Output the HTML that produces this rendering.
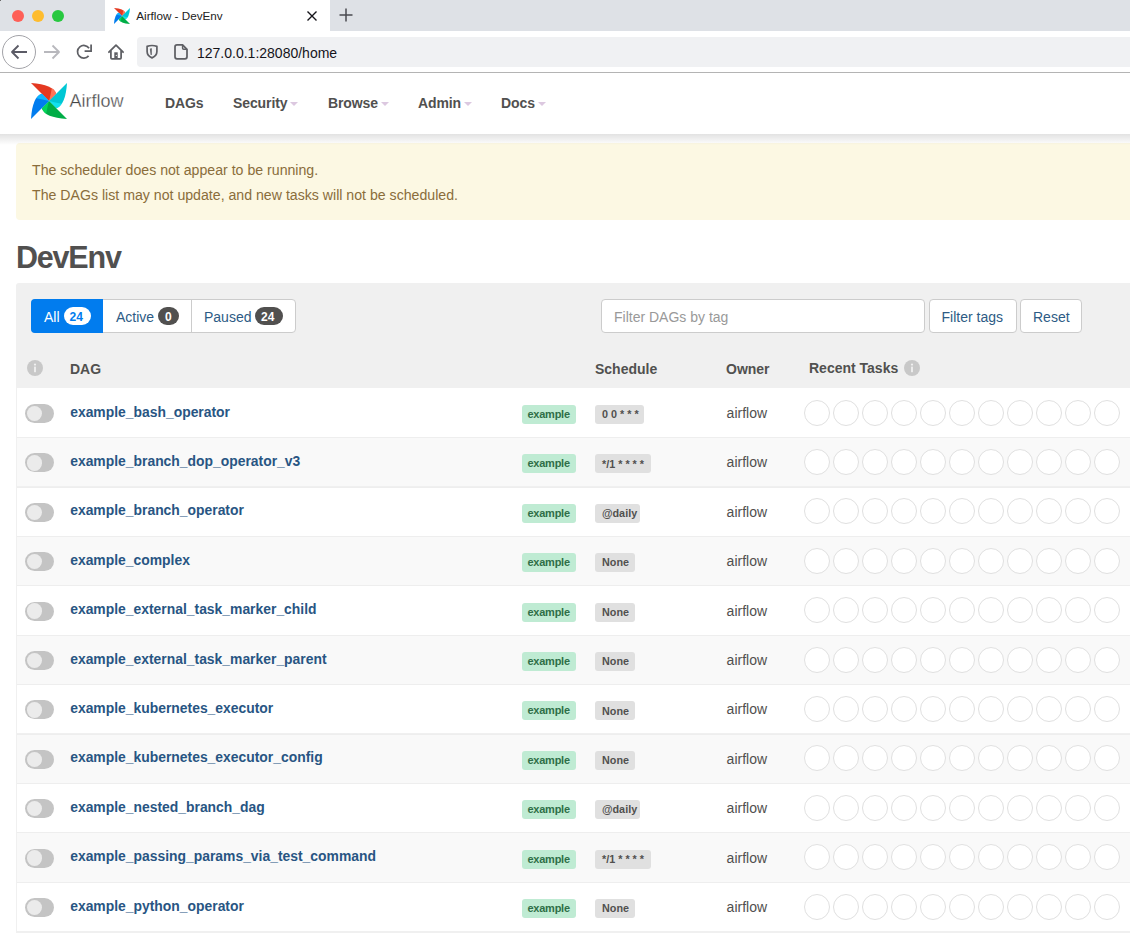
<!DOCTYPE html><html><head><meta charset="utf-8"><title>Airflow - DevEnv</title><style>
*{margin:0;padding:0;box-sizing:border-box}
html,body{width:1130px;height:933px;overflow:hidden;background:#fff;font-family:"Liberation Sans", sans-serif;}
.t{position:absolute;white-space:pre}
.a{position:absolute}
</style></head><body>
<div class="a" style="left:0;top:0;width:1130px;height:31px;background:#dee1e6"></div>
<div class="a" style="left:105px;top:0;width:225px;height:31px;background:#fff"></div>
<div class="a" style="left:0;top:0;width:1px;height:1px;background:#6a6a6a"></div>
<div class="a" style="left:12px;top:10px;width:12px;height:12px;border-radius:50%;background:#fe5f57;"></div>
<div class="a" style="left:32px;top:10px;width:12px;height:12px;border-radius:50%;background:#febc2e;"></div>
<div class="a" style="left:52px;top:10px;width:12px;height:12px;border-radius:50%;background:#28c840;"></div>
<svg class="a" style="left:114px;top:8px" width="16" height="16" viewBox="0 0 100 100">
<path d="M0,0 L50,50 L70,30 Q62,4 0,0Z" fill="#e43921"/>
<path d="M50,50 L70,30 Q67.2,20.9 57.8,14.5 Q55,32 50,50Z" fill="#ff7557"/>
<path d="M100,0 L50,50 L70,70 Q96,62 100,0Z" fill="#00c7d4"/>
<path d="M50,50 L70,70 Q79.1,67.2 85.5,57.8 Q68,55 50,50Z" fill="#11e1ee"/>
<path d="M100,100 L50,50 L30,70 Q38,96 100,100Z" fill="#00ad46"/>
<path d="M50,50 L30,70 Q32.8,79.1 42.2,85.5 Q45,68 50,50Z" fill="#04d659"/>
<path d="M0,100 L50,50 L30,30 Q4,38 0,100Z" fill="#017cee"/>
<path d="M50,50 L30,30 Q20.9,32.8 14.5,42.2 Q32,45 50,50Z" fill="#0cb6ff"/>
</svg>
<div class="t" style="left:136.3px;top:10.10px;font-size:11.7px;line-height:11.7px;font-weight:400;color:#222;">Airflow - DevEnv</div>

<svg class="a" style="left:306px;top:10px" width="12" height="12" viewBox="0 0 12 12"><path d="M1.5 1.5L10.5 10.5M10.5 1.5L1.5 10.5" stroke="#15141a" stroke-width="1.4"/></svg>
<svg class="a" style="left:338px;top:7px" width="16" height="16" viewBox="0 0 16 16"><path d="M8 1.5V14.5M1.5 8H14.5" stroke="#4a4a50" stroke-width="1.5"/></svg>
<div class="a" style="left:0;top:72px;width:1130px;height:1px;background:#b4b4b4"></div>
<div class="a" style="left:2px;top:35px;width:34px;height:34px;border-radius:50%;border:1px solid #a3a3a8"></div>
<svg class="a" style="left:10px;top:44px" width="18" height="16" viewBox="0 0 18 16"><path d="M2 8H17M8.5 1.5L2 8L8.5 14.5" stroke="#5b5b66" stroke-width="1.8" fill="none" stroke-linejoin="round"/></svg>
<svg class="a" style="left:43px;top:44px" width="18" height="16" viewBox="0 0 18 16"><path d="M1 8H16M9.5 1.5L16 8L9.5 14.5" stroke="#b8b8bd" stroke-width="1.8" fill="none" stroke-linejoin="round"/></svg>
<div class="a" style="left:137px;top:37px;width:1000px;height:30px;border-radius:4px;background:#f0f1f3"></div>
<svg class="a" style="left:0;top:0" width="200" height="75" viewBox="0 0 200 75">
<path d="M88.6,55.9 A6.3,6.3 0 1 1 89.06,48.29" stroke="#5e5f64" stroke-width="1.75" fill="none"/>
<path d="M91.1,44.4 V51.2 H84.6" stroke="#5e5f64" stroke-width="1.75" fill="none" stroke-linejoin="miter"/>
<path d="M108.9,52.2 L116,45.1 L123.1,52.2" stroke="#5e5f64" stroke-width="1.75" fill="none" stroke-linecap="round" stroke-linejoin="round"/>
<path d="M110.9,50.5 V57.8 Q110.9,58.8 111.9,58.8 H120.1 Q121.1,58.8 121.1,57.8 V50.5" stroke="#5e5f64" stroke-width="1.75" fill="none"/>
<rect x="114.3" y="52.3" width="3.4" height="6.5" fill="#5e5f64"/>
<circle cx="116.3" cy="55.4" r="0.55" fill="#fff"/>
<path d="M147.1,46.4 Q152,44.6 156.9,46.4 V51.5 Q156.9,55.8 152,57.9 Q147.1,55.8 147.1,51.5 Z" stroke="#5e5f64" stroke-width="1.7" fill="none" stroke-linejoin="round"/>
<path d="M150.3,48.9 L151.4,48.6 L151.2,54.9 Z" fill="#5e5f64" stroke="#5e5f64" stroke-width="0.8" stroke-linejoin="round"/>
<path d="M177,44.9 H182.6 L187,49.3 V56.8 Q187,58.8 185,58.8 H177 Q175,58.8 175,56.8 V46.9 Q175,44.9 177,44.9 Z" stroke="#5e5f64" stroke-width="1.75" fill="none" stroke-linejoin="round"/>
<path d="M182.6,45 V48.3 Q182.6,49.3 183.6,49.3 H186.9" stroke="#5e5f64" stroke-width="1.5" fill="none"/>
</svg>
<div class="t" style="left:197px;top:46.15px;font-size:14px;line-height:14px;font-weight:400;color:#15141a;">127.0.0.1:28080/home</div>

<div class="a" style="left:0;top:73px;width:1130px;height:61px;background:#fff;z-index:2"></div>
<div class="a" style="left:0;top:134px;width:1130px;height:11px;background:linear-gradient(rgba(0,0,0,0.115),rgba(0,0,0,0.0));z-index:2"></div>
<svg class="a" style="z-index:3;left:31px;top:83px" width="36" height="36" viewBox="0 0 100 100">
<path d="M0,0 L50,50 L70,30 Q62,4 0,0Z" fill="#e43921"/>
<path d="M50,50 L70,30 Q67.2,20.9 57.8,14.5 Q55,32 50,50Z" fill="#ff7557"/>
<path d="M100,0 L50,50 L70,70 Q96,62 100,0Z" fill="#00c7d4"/>
<path d="M50,50 L70,70 Q79.1,67.2 85.5,57.8 Q68,55 50,50Z" fill="#11e1ee"/>
<path d="M100,100 L50,50 L30,70 Q38,96 100,100Z" fill="#00ad46"/>
<path d="M50,50 L30,70 Q32.8,79.1 42.2,85.5 Q45,68 50,50Z" fill="#04d659"/>
<path d="M0,100 L50,50 L30,30 Q4,38 0,100Z" fill="#017cee"/>
<path d="M50,50 L30,30 Q20.9,32.8 14.5,42.2 Q32,45 50,50Z" fill="#0cb6ff"/>
</svg>
<div class="t" style="left:69.5px;top:91.76px;font-size:18px;line-height:18px;font-weight:400;color:#454545;z-index:3;-webkit-text-stroke:0.3px #fff">Airflow</div>

<div class="t" style="left:165px;top:96.15px;font-size:14px;line-height:14px;font-weight:700;color:#51504f;z-index:3;letter-spacing:-0.1px">DAGs</div>

<div class="t" style="left:233px;top:96.15px;font-size:14px;line-height:14px;font-weight:700;color:#51504f;z-index:3;letter-spacing:-0.1px">Security</div>

<svg class="a" style="left:290px;top:102px;z-index:3" width="8" height="4" viewBox="0 0 8 4"><path d="M0 0H8L4 4Z" fill="#dcc8e0"/></svg>
<div class="t" style="left:328px;top:96.15px;font-size:14px;line-height:14px;font-weight:700;color:#51504f;z-index:3;letter-spacing:-0.1px">Browse</div>

<svg class="a" style="left:381px;top:102px;z-index:3" width="8" height="4" viewBox="0 0 8 4"><path d="M0 0H8L4 4Z" fill="#dcc8e0"/></svg>
<div class="t" style="left:418px;top:96.15px;font-size:14px;line-height:14px;font-weight:700;color:#51504f;z-index:3;letter-spacing:-0.1px">Admin</div>

<svg class="a" style="left:464px;top:102px;z-index:3" width="8" height="4" viewBox="0 0 8 4"><path d="M0 0H8L4 4Z" fill="#dcc8e0"/></svg>
<div class="t" style="left:501px;top:96.15px;font-size:14px;line-height:14px;font-weight:700;color:#51504f;z-index:3;letter-spacing:-0.1px">Docs</div>

<svg class="a" style="left:538px;top:102px;z-index:3" width="8" height="4" viewBox="0 0 8 4"><path d="M0 0H8L4 4Z" fill="#dcc8e0"/></svg>
<div class="a" style="left:16px;top:143px;width:1130px;height:76.6px;background:#fcf8e3;border-radius:4px"></div>
<div class="t" style="left:32px;top:163.12px;font-size:14.15px;line-height:14.15px;font-weight:400;color:#8a6d3b;">The scheduler does not appear to be running.</div>

<div class="t" style="left:32px;top:187.92px;font-size:14.15px;line-height:14.15px;font-weight:400;color:#8a6d3b;">The DAGs list may not update, and new tasks will not be scheduled.</div>

<div class="t" style="left:16px;top:242.28px;font-size:30.5px;line-height:30.5px;font-weight:700;color:#51504f;letter-spacing:-1.2px">DevEnv</div>

<div class="a" style="left:16px;top:283px;width:1130px;height:700px;background:#f0f0f0;border-radius:3px"></div>
<div class="a" style="left:31px;top:299px;width:265px;height:34px;border:1px solid #ccc;border-radius:4px;background:#fff"></div>
<div class="a" style="left:31px;top:299px;width:72px;height:34px;background:#017cee;border-radius:4px 0 0 4px"></div>
<div class="a" style="left:191px;top:299px;width:1px;height:34px;background:#ccc"></div>
<div class="t" style="left:44px;top:309.75px;font-size:14px;line-height:14px;font-weight:400;color:#fff;">All</div>

<div class="a" style="left:64px;top:307px;width:27px;height:18px;border-radius:9px;background:#fff"></div>
<div class="t" style="left:69.5px;top:310.64px;font-size:12px;line-height:12px;font-weight:700;color:#017cee;">24</div>

<div class="t" style="left:116px;top:309.75px;font-size:14px;line-height:14px;font-weight:400;color:#2d5b85;">Active</div>

<div class="a" style="left:158px;top:307px;width:21px;height:18px;border-radius:9px;background:#51504f"></div>
<div class="t" style="left:165px;top:310.64px;font-size:12px;line-height:12px;font-weight:700;color:#fff;">0</div>

<div class="t" style="left:204px;top:309.75px;font-size:14px;line-height:14px;font-weight:400;color:#2d5b85;">Paused</div>

<div class="a" style="left:255px;top:307px;width:28px;height:18px;border-radius:9px;background:#51504f"></div>
<div class="t" style="left:261px;top:310.64px;font-size:12px;line-height:12px;font-weight:700;color:#fff;">24</div>

<div class="a" style="left:601px;top:299px;width:324px;height:34px;border:1px solid #ccc;border-radius:4px;background:#fff"></div>
<div class="t" style="left:614px;top:309.75px;font-size:14px;line-height:14px;font-weight:400;color:#999;">Filter DAGs by tag</div>

<div class="a" style="left:929px;top:299px;width:88px;height:34px;border:1px solid #ccc;border-radius:4px;background:#fff"></div>
<div class="t" style="left:941.5px;top:309.75px;font-size:14px;line-height:14px;font-weight:400;color:#2d5b85;">Filter tags</div>

<div class="a" style="left:1020px;top:299px;width:62px;height:34px;border:1px solid #ccc;border-radius:4px;background:#fff"></div>
<div class="t" style="left:1033px;top:309.75px;font-size:14px;line-height:14px;font-weight:400;color:#2d5b85;">Reset</div>

<svg class="a" style="left:27px;top:360px" width="16" height="16" viewBox="0 0 16 16"><circle cx="8" cy="8" r="8" fill="#c8c8c8"/><circle cx="8" cy="4.6" r="1.1" fill="#f0f0f0"/><rect x="7.1" y="6.6" width="1.8" height="5.6" fill="#f0f0f0"/></svg>
<div class="t" style="left:70px;top:362.15px;font-size:14px;line-height:14px;font-weight:700;color:#51504f;">DAG</div>

<div class="t" style="left:595px;top:361.85px;font-size:14px;line-height:14px;font-weight:700;color:#51504f;">Schedule</div>

<div class="t" style="left:726px;top:361.85px;font-size:14px;line-height:14px;font-weight:700;color:#51504f;">Owner</div>

<div class="t" style="left:809px;top:361.15px;font-size:14px;line-height:14px;font-weight:700;color:#51504f;">Recent Tasks</div>

<svg class="a" style="left:904.4px;top:360px" width="16" height="16" viewBox="0 0 16 16"><circle cx="8" cy="8" r="8" fill="#c8c8c8"/><circle cx="8" cy="4.6" r="1.1" fill="#f0f0f0"/><rect x="7.1" y="6.6" width="1.8" height="5.6" fill="#f0f0f0"/></svg>
<div class="a" style="left:17px;top:387.70px;width:1120px;height:49.4px;background:#fff;border-top:1px solid #fff"></div>
<div class="a" style="left:17px;top:437.10px;width:1120px;height:49.4px;background:#f9f9f9;border-top:1px solid #eee"></div>
<div class="a" style="left:17px;top:486.50px;width:1120px;height:49.4px;background:#fff;border-top:1px solid #eee"></div>
<div class="a" style="left:17px;top:535.90px;width:1120px;height:49.4px;background:#f9f9f9;border-top:1px solid #eee"></div>
<div class="a" style="left:17px;top:585.30px;width:1120px;height:49.4px;background:#fff;border-top:1px solid #eee"></div>
<div class="a" style="left:17px;top:634.70px;width:1120px;height:49.4px;background:#f9f9f9;border-top:1px solid #eee"></div>
<div class="a" style="left:17px;top:684.10px;width:1120px;height:49.4px;background:#fff;border-top:1px solid #eee"></div>
<div class="a" style="left:17px;top:733.50px;width:1120px;height:49.4px;background:#f9f9f9;border-top:1px solid #eee"></div>
<div class="a" style="left:17px;top:782.90px;width:1120px;height:49.4px;background:#fff;border-top:1px solid #eee"></div>
<div class="a" style="left:17px;top:832.30px;width:1120px;height:49.4px;background:#f9f9f9;border-top:1px solid #eee"></div>
<div class="a" style="left:17px;top:881.70px;width:1120px;height:49.4px;background:#fff;border-top:1px solid #eee"></div>
<div class="a" style="left:25px;top:404.00px;width:29px;height:19px;border-radius:10px;background:#c4c4c4"></div>
<div class="a" style="left:26.6px;top:405.70px;width:15.5px;height:15.5px;border-radius:50%;background:#ebebeb"></div>
<div class="t" style="left:70.2px;top:405.63px;font-size:13.9px;line-height:13.9px;font-weight:700;color:#285583;">example_bash_operator</div>

<div class="a" style="left:522px;top:405.00px;width:54px;height:19px;border-radius:3px;background:#bfebd3"></div>
<div class="t" style="left:527.5px;top:408.99px;font-size:11px;line-height:11px;font-weight:700;color:#2f6f48;letter-spacing:-0.25px">example</div>

<div class="a" style="left:595px;top:405.00px;width:49px;height:19px;border-radius:3px;background:#e0e0e0"></div>
<div class="t" style="left:602px;top:409.16px;font-size:10.8px;line-height:10.8px;font-weight:700;color:#51504f;">0 0 * * *</div>

<div class="t" style="left:726.6px;top:405.95px;font-size:14px;line-height:14px;font-weight:400;color:#51504f;">airflow</div>

<svg class="a" style="left:804.1px;top:399.60px" width="330" height="27" viewBox="0 0 330 27"><circle cx="13" cy="13" r="12.5" fill="#fff" stroke="#e0e0e0" stroke-width="1"/><circle cx="42" cy="13" r="12.5" fill="#fff" stroke="#e0e0e0" stroke-width="1"/><circle cx="71" cy="13" r="12.5" fill="#fff" stroke="#e0e0e0" stroke-width="1"/><circle cx="100" cy="13" r="12.5" fill="#fff" stroke="#e0e0e0" stroke-width="1"/><circle cx="129" cy="13" r="12.5" fill="#fff" stroke="#e0e0e0" stroke-width="1"/><circle cx="158" cy="13" r="12.5" fill="#fff" stroke="#e0e0e0" stroke-width="1"/><circle cx="187" cy="13" r="12.5" fill="#fff" stroke="#e0e0e0" stroke-width="1"/><circle cx="216" cy="13" r="12.5" fill="#fff" stroke="#e0e0e0" stroke-width="1"/><circle cx="245" cy="13" r="12.5" fill="#fff" stroke="#e0e0e0" stroke-width="1"/><circle cx="274" cy="13" r="12.5" fill="#fff" stroke="#e0e0e0" stroke-width="1"/><circle cx="303" cy="13" r="12.5" fill="#fff" stroke="#e0e0e0" stroke-width="1"/></svg>
<div class="a" style="left:25px;top:453.40px;width:29px;height:19px;border-radius:10px;background:#c4c4c4"></div>
<div class="a" style="left:26.6px;top:455.10px;width:15.5px;height:15.5px;border-radius:50%;background:#ebebeb"></div>
<div class="t" style="left:70.2px;top:455.03px;font-size:13.9px;line-height:13.9px;font-weight:700;color:#285583;">example_branch_dop_operator_v3</div>

<div class="a" style="left:522px;top:454.40px;width:54px;height:19px;border-radius:3px;background:#bfebd3"></div>
<div class="t" style="left:527.5px;top:458.39px;font-size:11px;line-height:11px;font-weight:700;color:#2f6f48;letter-spacing:-0.25px">example</div>

<div class="a" style="left:595px;top:454.40px;width:56px;height:19px;border-radius:3px;background:#e0e0e0"></div>
<div class="t" style="left:602px;top:458.56px;font-size:10.8px;line-height:10.8px;font-weight:700;color:#51504f;">*/1 * * * *</div>

<div class="t" style="left:726.6px;top:455.35px;font-size:14px;line-height:14px;font-weight:400;color:#51504f;">airflow</div>

<svg class="a" style="left:804.1px;top:449.00px" width="330" height="27" viewBox="0 0 330 27"><circle cx="13" cy="13" r="12.5" fill="#fff" stroke="#e0e0e0" stroke-width="1"/><circle cx="42" cy="13" r="12.5" fill="#fff" stroke="#e0e0e0" stroke-width="1"/><circle cx="71" cy="13" r="12.5" fill="#fff" stroke="#e0e0e0" stroke-width="1"/><circle cx="100" cy="13" r="12.5" fill="#fff" stroke="#e0e0e0" stroke-width="1"/><circle cx="129" cy="13" r="12.5" fill="#fff" stroke="#e0e0e0" stroke-width="1"/><circle cx="158" cy="13" r="12.5" fill="#fff" stroke="#e0e0e0" stroke-width="1"/><circle cx="187" cy="13" r="12.5" fill="#fff" stroke="#e0e0e0" stroke-width="1"/><circle cx="216" cy="13" r="12.5" fill="#fff" stroke="#e0e0e0" stroke-width="1"/><circle cx="245" cy="13" r="12.5" fill="#fff" stroke="#e0e0e0" stroke-width="1"/><circle cx="274" cy="13" r="12.5" fill="#fff" stroke="#e0e0e0" stroke-width="1"/><circle cx="303" cy="13" r="12.5" fill="#fff" stroke="#e0e0e0" stroke-width="1"/></svg>
<div class="a" style="left:25px;top:502.80px;width:29px;height:19px;border-radius:10px;background:#c4c4c4"></div>
<div class="a" style="left:26.6px;top:504.50px;width:15.5px;height:15.5px;border-radius:50%;background:#ebebeb"></div>
<div class="t" style="left:70.2px;top:504.43px;font-size:13.9px;line-height:13.9px;font-weight:700;color:#285583;">example_branch_operator</div>

<div class="a" style="left:522px;top:503.80px;width:54px;height:19px;border-radius:3px;background:#bfebd3"></div>
<div class="t" style="left:527.5px;top:507.79px;font-size:11px;line-height:11px;font-weight:700;color:#2f6f48;letter-spacing:-0.25px">example</div>

<div class="a" style="left:595px;top:503.80px;width:45px;height:19px;border-radius:3px;background:#e0e0e0"></div>
<div class="t" style="left:602px;top:507.96px;font-size:10.8px;line-height:10.8px;font-weight:700;color:#51504f;">@daily</div>

<div class="t" style="left:726.6px;top:504.75px;font-size:14px;line-height:14px;font-weight:400;color:#51504f;">airflow</div>

<svg class="a" style="left:804.1px;top:498.40px" width="330" height="27" viewBox="0 0 330 27"><circle cx="13" cy="13" r="12.5" fill="#fff" stroke="#e0e0e0" stroke-width="1"/><circle cx="42" cy="13" r="12.5" fill="#fff" stroke="#e0e0e0" stroke-width="1"/><circle cx="71" cy="13" r="12.5" fill="#fff" stroke="#e0e0e0" stroke-width="1"/><circle cx="100" cy="13" r="12.5" fill="#fff" stroke="#e0e0e0" stroke-width="1"/><circle cx="129" cy="13" r="12.5" fill="#fff" stroke="#e0e0e0" stroke-width="1"/><circle cx="158" cy="13" r="12.5" fill="#fff" stroke="#e0e0e0" stroke-width="1"/><circle cx="187" cy="13" r="12.5" fill="#fff" stroke="#e0e0e0" stroke-width="1"/><circle cx="216" cy="13" r="12.5" fill="#fff" stroke="#e0e0e0" stroke-width="1"/><circle cx="245" cy="13" r="12.5" fill="#fff" stroke="#e0e0e0" stroke-width="1"/><circle cx="274" cy="13" r="12.5" fill="#fff" stroke="#e0e0e0" stroke-width="1"/><circle cx="303" cy="13" r="12.5" fill="#fff" stroke="#e0e0e0" stroke-width="1"/></svg>
<div class="a" style="left:25px;top:552.20px;width:29px;height:19px;border-radius:10px;background:#c4c4c4"></div>
<div class="a" style="left:26.6px;top:553.90px;width:15.5px;height:15.5px;border-radius:50%;background:#ebebeb"></div>
<div class="t" style="left:70.2px;top:553.83px;font-size:13.9px;line-height:13.9px;font-weight:700;color:#285583;">example_complex</div>

<div class="a" style="left:522px;top:553.20px;width:54px;height:19px;border-radius:3px;background:#bfebd3"></div>
<div class="t" style="left:527.5px;top:557.19px;font-size:11px;line-height:11px;font-weight:700;color:#2f6f48;letter-spacing:-0.25px">example</div>

<div class="a" style="left:595px;top:553.20px;width:40px;height:19px;border-radius:3px;background:#e0e0e0"></div>
<div class="t" style="left:602px;top:557.36px;font-size:10.8px;line-height:10.8px;font-weight:700;color:#51504f;">None</div>

<div class="t" style="left:726.6px;top:554.15px;font-size:14px;line-height:14px;font-weight:400;color:#51504f;">airflow</div>

<svg class="a" style="left:804.1px;top:547.80px" width="330" height="27" viewBox="0 0 330 27"><circle cx="13" cy="13" r="12.5" fill="#fff" stroke="#e0e0e0" stroke-width="1"/><circle cx="42" cy="13" r="12.5" fill="#fff" stroke="#e0e0e0" stroke-width="1"/><circle cx="71" cy="13" r="12.5" fill="#fff" stroke="#e0e0e0" stroke-width="1"/><circle cx="100" cy="13" r="12.5" fill="#fff" stroke="#e0e0e0" stroke-width="1"/><circle cx="129" cy="13" r="12.5" fill="#fff" stroke="#e0e0e0" stroke-width="1"/><circle cx="158" cy="13" r="12.5" fill="#fff" stroke="#e0e0e0" stroke-width="1"/><circle cx="187" cy="13" r="12.5" fill="#fff" stroke="#e0e0e0" stroke-width="1"/><circle cx="216" cy="13" r="12.5" fill="#fff" stroke="#e0e0e0" stroke-width="1"/><circle cx="245" cy="13" r="12.5" fill="#fff" stroke="#e0e0e0" stroke-width="1"/><circle cx="274" cy="13" r="12.5" fill="#fff" stroke="#e0e0e0" stroke-width="1"/><circle cx="303" cy="13" r="12.5" fill="#fff" stroke="#e0e0e0" stroke-width="1"/></svg>
<div class="a" style="left:25px;top:601.60px;width:29px;height:19px;border-radius:10px;background:#c4c4c4"></div>
<div class="a" style="left:26.6px;top:603.30px;width:15.5px;height:15.5px;border-radius:50%;background:#ebebeb"></div>
<div class="t" style="left:70.2px;top:603.23px;font-size:13.9px;line-height:13.9px;font-weight:700;color:#285583;">example_external_task_marker_child</div>

<div class="a" style="left:522px;top:602.60px;width:54px;height:19px;border-radius:3px;background:#bfebd3"></div>
<div class="t" style="left:527.5px;top:606.59px;font-size:11px;line-height:11px;font-weight:700;color:#2f6f48;letter-spacing:-0.25px">example</div>

<div class="a" style="left:595px;top:602.60px;width:40px;height:19px;border-radius:3px;background:#e0e0e0"></div>
<div class="t" style="left:602px;top:606.76px;font-size:10.8px;line-height:10.8px;font-weight:700;color:#51504f;">None</div>

<div class="t" style="left:726.6px;top:603.55px;font-size:14px;line-height:14px;font-weight:400;color:#51504f;">airflow</div>

<svg class="a" style="left:804.1px;top:597.20px" width="330" height="27" viewBox="0 0 330 27"><circle cx="13" cy="13" r="12.5" fill="#fff" stroke="#e0e0e0" stroke-width="1"/><circle cx="42" cy="13" r="12.5" fill="#fff" stroke="#e0e0e0" stroke-width="1"/><circle cx="71" cy="13" r="12.5" fill="#fff" stroke="#e0e0e0" stroke-width="1"/><circle cx="100" cy="13" r="12.5" fill="#fff" stroke="#e0e0e0" stroke-width="1"/><circle cx="129" cy="13" r="12.5" fill="#fff" stroke="#e0e0e0" stroke-width="1"/><circle cx="158" cy="13" r="12.5" fill="#fff" stroke="#e0e0e0" stroke-width="1"/><circle cx="187" cy="13" r="12.5" fill="#fff" stroke="#e0e0e0" stroke-width="1"/><circle cx="216" cy="13" r="12.5" fill="#fff" stroke="#e0e0e0" stroke-width="1"/><circle cx="245" cy="13" r="12.5" fill="#fff" stroke="#e0e0e0" stroke-width="1"/><circle cx="274" cy="13" r="12.5" fill="#fff" stroke="#e0e0e0" stroke-width="1"/><circle cx="303" cy="13" r="12.5" fill="#fff" stroke="#e0e0e0" stroke-width="1"/></svg>
<div class="a" style="left:25px;top:651.00px;width:29px;height:19px;border-radius:10px;background:#c4c4c4"></div>
<div class="a" style="left:26.6px;top:652.70px;width:15.5px;height:15.5px;border-radius:50%;background:#ebebeb"></div>
<div class="t" style="left:70.2px;top:652.63px;font-size:13.9px;line-height:13.9px;font-weight:700;color:#285583;">example_external_task_marker_parent</div>

<div class="a" style="left:522px;top:652.00px;width:54px;height:19px;border-radius:3px;background:#bfebd3"></div>
<div class="t" style="left:527.5px;top:655.99px;font-size:11px;line-height:11px;font-weight:700;color:#2f6f48;letter-spacing:-0.25px">example</div>

<div class="a" style="left:595px;top:652.00px;width:40px;height:19px;border-radius:3px;background:#e0e0e0"></div>
<div class="t" style="left:602px;top:656.16px;font-size:10.8px;line-height:10.8px;font-weight:700;color:#51504f;">None</div>

<div class="t" style="left:726.6px;top:652.95px;font-size:14px;line-height:14px;font-weight:400;color:#51504f;">airflow</div>

<svg class="a" style="left:804.1px;top:646.60px" width="330" height="27" viewBox="0 0 330 27"><circle cx="13" cy="13" r="12.5" fill="#fff" stroke="#e0e0e0" stroke-width="1"/><circle cx="42" cy="13" r="12.5" fill="#fff" stroke="#e0e0e0" stroke-width="1"/><circle cx="71" cy="13" r="12.5" fill="#fff" stroke="#e0e0e0" stroke-width="1"/><circle cx="100" cy="13" r="12.5" fill="#fff" stroke="#e0e0e0" stroke-width="1"/><circle cx="129" cy="13" r="12.5" fill="#fff" stroke="#e0e0e0" stroke-width="1"/><circle cx="158" cy="13" r="12.5" fill="#fff" stroke="#e0e0e0" stroke-width="1"/><circle cx="187" cy="13" r="12.5" fill="#fff" stroke="#e0e0e0" stroke-width="1"/><circle cx="216" cy="13" r="12.5" fill="#fff" stroke="#e0e0e0" stroke-width="1"/><circle cx="245" cy="13" r="12.5" fill="#fff" stroke="#e0e0e0" stroke-width="1"/><circle cx="274" cy="13" r="12.5" fill="#fff" stroke="#e0e0e0" stroke-width="1"/><circle cx="303" cy="13" r="12.5" fill="#fff" stroke="#e0e0e0" stroke-width="1"/></svg>
<div class="a" style="left:25px;top:700.40px;width:29px;height:19px;border-radius:10px;background:#c4c4c4"></div>
<div class="a" style="left:26.6px;top:702.10px;width:15.5px;height:15.5px;border-radius:50%;background:#ebebeb"></div>
<div class="t" style="left:70.2px;top:702.03px;font-size:13.9px;line-height:13.9px;font-weight:700;color:#285583;">example_kubernetes_executor</div>

<div class="a" style="left:522px;top:701.40px;width:54px;height:19px;border-radius:3px;background:#bfebd3"></div>
<div class="t" style="left:527.5px;top:705.39px;font-size:11px;line-height:11px;font-weight:700;color:#2f6f48;letter-spacing:-0.25px">example</div>

<div class="a" style="left:595px;top:701.40px;width:40px;height:19px;border-radius:3px;background:#e0e0e0"></div>
<div class="t" style="left:602px;top:705.56px;font-size:10.8px;line-height:10.8px;font-weight:700;color:#51504f;">None</div>

<div class="t" style="left:726.6px;top:702.35px;font-size:14px;line-height:14px;font-weight:400;color:#51504f;">airflow</div>

<svg class="a" style="left:804.1px;top:696.00px" width="330" height="27" viewBox="0 0 330 27"><circle cx="13" cy="13" r="12.5" fill="#fff" stroke="#e0e0e0" stroke-width="1"/><circle cx="42" cy="13" r="12.5" fill="#fff" stroke="#e0e0e0" stroke-width="1"/><circle cx="71" cy="13" r="12.5" fill="#fff" stroke="#e0e0e0" stroke-width="1"/><circle cx="100" cy="13" r="12.5" fill="#fff" stroke="#e0e0e0" stroke-width="1"/><circle cx="129" cy="13" r="12.5" fill="#fff" stroke="#e0e0e0" stroke-width="1"/><circle cx="158" cy="13" r="12.5" fill="#fff" stroke="#e0e0e0" stroke-width="1"/><circle cx="187" cy="13" r="12.5" fill="#fff" stroke="#e0e0e0" stroke-width="1"/><circle cx="216" cy="13" r="12.5" fill="#fff" stroke="#e0e0e0" stroke-width="1"/><circle cx="245" cy="13" r="12.5" fill="#fff" stroke="#e0e0e0" stroke-width="1"/><circle cx="274" cy="13" r="12.5" fill="#fff" stroke="#e0e0e0" stroke-width="1"/><circle cx="303" cy="13" r="12.5" fill="#fff" stroke="#e0e0e0" stroke-width="1"/></svg>
<div class="a" style="left:25px;top:749.80px;width:29px;height:19px;border-radius:10px;background:#c4c4c4"></div>
<div class="a" style="left:26.6px;top:751.50px;width:15.5px;height:15.5px;border-radius:50%;background:#ebebeb"></div>
<div class="t" style="left:70.2px;top:751.43px;font-size:13.9px;line-height:13.9px;font-weight:700;color:#285583;">example_kubernetes_executor_config</div>

<div class="a" style="left:522px;top:750.80px;width:54px;height:19px;border-radius:3px;background:#bfebd3"></div>
<div class="t" style="left:527.5px;top:754.79px;font-size:11px;line-height:11px;font-weight:700;color:#2f6f48;letter-spacing:-0.25px">example</div>

<div class="a" style="left:595px;top:750.80px;width:40px;height:19px;border-radius:3px;background:#e0e0e0"></div>
<div class="t" style="left:602px;top:754.96px;font-size:10.8px;line-height:10.8px;font-weight:700;color:#51504f;">None</div>

<div class="t" style="left:726.6px;top:751.75px;font-size:14px;line-height:14px;font-weight:400;color:#51504f;">airflow</div>

<svg class="a" style="left:804.1px;top:745.40px" width="330" height="27" viewBox="0 0 330 27"><circle cx="13" cy="13" r="12.5" fill="#fff" stroke="#e0e0e0" stroke-width="1"/><circle cx="42" cy="13" r="12.5" fill="#fff" stroke="#e0e0e0" stroke-width="1"/><circle cx="71" cy="13" r="12.5" fill="#fff" stroke="#e0e0e0" stroke-width="1"/><circle cx="100" cy="13" r="12.5" fill="#fff" stroke="#e0e0e0" stroke-width="1"/><circle cx="129" cy="13" r="12.5" fill="#fff" stroke="#e0e0e0" stroke-width="1"/><circle cx="158" cy="13" r="12.5" fill="#fff" stroke="#e0e0e0" stroke-width="1"/><circle cx="187" cy="13" r="12.5" fill="#fff" stroke="#e0e0e0" stroke-width="1"/><circle cx="216" cy="13" r="12.5" fill="#fff" stroke="#e0e0e0" stroke-width="1"/><circle cx="245" cy="13" r="12.5" fill="#fff" stroke="#e0e0e0" stroke-width="1"/><circle cx="274" cy="13" r="12.5" fill="#fff" stroke="#e0e0e0" stroke-width="1"/><circle cx="303" cy="13" r="12.5" fill="#fff" stroke="#e0e0e0" stroke-width="1"/></svg>
<div class="a" style="left:25px;top:799.20px;width:29px;height:19px;border-radius:10px;background:#c4c4c4"></div>
<div class="a" style="left:26.6px;top:800.90px;width:15.5px;height:15.5px;border-radius:50%;background:#ebebeb"></div>
<div class="t" style="left:70.2px;top:800.83px;font-size:13.9px;line-height:13.9px;font-weight:700;color:#285583;">example_nested_branch_dag</div>

<div class="a" style="left:522px;top:800.20px;width:54px;height:19px;border-radius:3px;background:#bfebd3"></div>
<div class="t" style="left:527.5px;top:804.19px;font-size:11px;line-height:11px;font-weight:700;color:#2f6f48;letter-spacing:-0.25px">example</div>

<div class="a" style="left:595px;top:800.20px;width:45px;height:19px;border-radius:3px;background:#e0e0e0"></div>
<div class="t" style="left:602px;top:804.36px;font-size:10.8px;line-height:10.8px;font-weight:700;color:#51504f;">@daily</div>

<div class="t" style="left:726.6px;top:801.15px;font-size:14px;line-height:14px;font-weight:400;color:#51504f;">airflow</div>

<svg class="a" style="left:804.1px;top:794.80px" width="330" height="27" viewBox="0 0 330 27"><circle cx="13" cy="13" r="12.5" fill="#fff" stroke="#e0e0e0" stroke-width="1"/><circle cx="42" cy="13" r="12.5" fill="#fff" stroke="#e0e0e0" stroke-width="1"/><circle cx="71" cy="13" r="12.5" fill="#fff" stroke="#e0e0e0" stroke-width="1"/><circle cx="100" cy="13" r="12.5" fill="#fff" stroke="#e0e0e0" stroke-width="1"/><circle cx="129" cy="13" r="12.5" fill="#fff" stroke="#e0e0e0" stroke-width="1"/><circle cx="158" cy="13" r="12.5" fill="#fff" stroke="#e0e0e0" stroke-width="1"/><circle cx="187" cy="13" r="12.5" fill="#fff" stroke="#e0e0e0" stroke-width="1"/><circle cx="216" cy="13" r="12.5" fill="#fff" stroke="#e0e0e0" stroke-width="1"/><circle cx="245" cy="13" r="12.5" fill="#fff" stroke="#e0e0e0" stroke-width="1"/><circle cx="274" cy="13" r="12.5" fill="#fff" stroke="#e0e0e0" stroke-width="1"/><circle cx="303" cy="13" r="12.5" fill="#fff" stroke="#e0e0e0" stroke-width="1"/></svg>
<div class="a" style="left:25px;top:848.60px;width:29px;height:19px;border-radius:10px;background:#c4c4c4"></div>
<div class="a" style="left:26.6px;top:850.30px;width:15.5px;height:15.5px;border-radius:50%;background:#ebebeb"></div>
<div class="t" style="left:70.2px;top:850.23px;font-size:13.9px;line-height:13.9px;font-weight:700;color:#285583;">example_passing_params_via_test_command</div>

<div class="a" style="left:522px;top:849.60px;width:54px;height:19px;border-radius:3px;background:#bfebd3"></div>
<div class="t" style="left:527.5px;top:853.59px;font-size:11px;line-height:11px;font-weight:700;color:#2f6f48;letter-spacing:-0.25px">example</div>

<div class="a" style="left:595px;top:849.60px;width:56px;height:19px;border-radius:3px;background:#e0e0e0"></div>
<div class="t" style="left:602px;top:853.76px;font-size:10.8px;line-height:10.8px;font-weight:700;color:#51504f;">*/1 * * * *</div>

<div class="t" style="left:726.6px;top:850.55px;font-size:14px;line-height:14px;font-weight:400;color:#51504f;">airflow</div>

<svg class="a" style="left:804.1px;top:844.20px" width="330" height="27" viewBox="0 0 330 27"><circle cx="13" cy="13" r="12.5" fill="#fff" stroke="#e0e0e0" stroke-width="1"/><circle cx="42" cy="13" r="12.5" fill="#fff" stroke="#e0e0e0" stroke-width="1"/><circle cx="71" cy="13" r="12.5" fill="#fff" stroke="#e0e0e0" stroke-width="1"/><circle cx="100" cy="13" r="12.5" fill="#fff" stroke="#e0e0e0" stroke-width="1"/><circle cx="129" cy="13" r="12.5" fill="#fff" stroke="#e0e0e0" stroke-width="1"/><circle cx="158" cy="13" r="12.5" fill="#fff" stroke="#e0e0e0" stroke-width="1"/><circle cx="187" cy="13" r="12.5" fill="#fff" stroke="#e0e0e0" stroke-width="1"/><circle cx="216" cy="13" r="12.5" fill="#fff" stroke="#e0e0e0" stroke-width="1"/><circle cx="245" cy="13" r="12.5" fill="#fff" stroke="#e0e0e0" stroke-width="1"/><circle cx="274" cy="13" r="12.5" fill="#fff" stroke="#e0e0e0" stroke-width="1"/><circle cx="303" cy="13" r="12.5" fill="#fff" stroke="#e0e0e0" stroke-width="1"/></svg>
<div class="a" style="left:25px;top:898.00px;width:29px;height:19px;border-radius:10px;background:#c4c4c4"></div>
<div class="a" style="left:26.6px;top:899.70px;width:15.5px;height:15.5px;border-radius:50%;background:#ebebeb"></div>
<div class="t" style="left:70.2px;top:899.63px;font-size:13.9px;line-height:13.9px;font-weight:700;color:#285583;">example_python_operator</div>

<div class="a" style="left:522px;top:899.00px;width:54px;height:19px;border-radius:3px;background:#bfebd3"></div>
<div class="t" style="left:527.5px;top:902.99px;font-size:11px;line-height:11px;font-weight:700;color:#2f6f48;letter-spacing:-0.25px">example</div>

<div class="a" style="left:595px;top:899.00px;width:40px;height:19px;border-radius:3px;background:#e0e0e0"></div>
<div class="t" style="left:602px;top:903.16px;font-size:10.8px;line-height:10.8px;font-weight:700;color:#51504f;">None</div>

<div class="t" style="left:726.6px;top:899.95px;font-size:14px;line-height:14px;font-weight:400;color:#51504f;">airflow</div>

<svg class="a" style="left:804.1px;top:893.60px" width="330" height="27" viewBox="0 0 330 27"><circle cx="13" cy="13" r="12.5" fill="#fff" stroke="#e0e0e0" stroke-width="1"/><circle cx="42" cy="13" r="12.5" fill="#fff" stroke="#e0e0e0" stroke-width="1"/><circle cx="71" cy="13" r="12.5" fill="#fff" stroke="#e0e0e0" stroke-width="1"/><circle cx="100" cy="13" r="12.5" fill="#fff" stroke="#e0e0e0" stroke-width="1"/><circle cx="129" cy="13" r="12.5" fill="#fff" stroke="#e0e0e0" stroke-width="1"/><circle cx="158" cy="13" r="12.5" fill="#fff" stroke="#e0e0e0" stroke-width="1"/><circle cx="187" cy="13" r="12.5" fill="#fff" stroke="#e0e0e0" stroke-width="1"/><circle cx="216" cy="13" r="12.5" fill="#fff" stroke="#e0e0e0" stroke-width="1"/><circle cx="245" cy="13" r="12.5" fill="#fff" stroke="#e0e0e0" stroke-width="1"/><circle cx="274" cy="13" r="12.5" fill="#fff" stroke="#e0e0e0" stroke-width="1"/><circle cx="303" cy="13" r="12.5" fill="#fff" stroke="#e0e0e0" stroke-width="1"/></svg>
</body></html>
